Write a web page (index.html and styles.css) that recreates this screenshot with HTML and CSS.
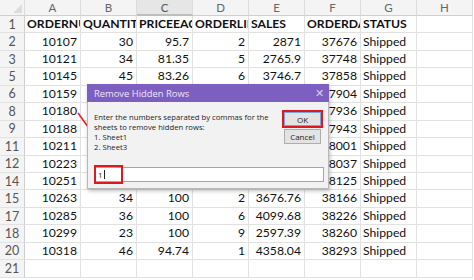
FILE: index.html
```html
<!DOCTYPE html>
<html>
<head>
<meta charset="utf-8">
<link rel="stylesheet" href="styles.css">
</head>
<body>
<div class="sheet">
  <div class="grid">
    <div class="hd corner"><span class="tri"></span></div>
    <div class="hd">A</div><div class="hd">B</div><div class="hd sel">C</div><div class="hd">D</div><div class="hd">E</div><div class="hd">F</div><div class="hd">G</div><div class="hd">H</div>

    <div class="rn">1</div><div class="c b">ORDERNUMBER</div><div class="c b">QUANTITYORDERED</div><div class="c b">PRICEEACH</div><div class="c b">ORDERLINENUMBER</div><div class="c b">SALES</div><div class="c b">ORDERDATE</div><div class="c b">STATUS</div><div class="c"></div>
    <div class="rn">2</div><div class="c n">10107</div><div class="c n">30</div><div class="c n">95.7</div><div class="c n">2</div><div class="c n">2871</div><div class="c n">37676</div><div class="c">Shipped</div><div class="c"></div>
    <div class="rn">3</div><div class="c n">10121</div><div class="c n">34</div><div class="c n">81.35</div><div class="c n">5</div><div class="c n">2765.9</div><div class="c n">37748</div><div class="c">Shipped</div><div class="c"></div>
    <div class="rn">5</div><div class="c n">10145</div><div class="c n">45</div><div class="c n">83.26</div><div class="c n">6</div><div class="c n">3746.7</div><div class="c n">37858</div><div class="c">Shipped</div><div class="c"></div>
    <div class="rn">6</div><div class="c n">10159</div><div class="c n">49</div><div class="c n">100</div><div class="c n">14</div><div class="c n">5205.27</div><div class="c n">37904</div><div class="c">Shipped</div><div class="c"></div>
    <div class="rn">8</div><div class="c n">10180</div><div class="c n">29</div><div class="c n">86.13</div><div class="c n">9</div><div class="c n">2497.77</div><div class="c n">37936</div><div class="c">Shipped</div><div class="c"></div>
    <div class="rn">9</div><div class="c n">10188</div><div class="c n">48</div><div class="c n">100</div><div class="c n">1</div><div class="c n">5512.32</div><div class="c n">37943</div><div class="c">Shipped</div><div class="c"></div>
    <div class="rn">11</div><div class="c n">10211</div><div class="c n">41</div><div class="c n">100</div><div class="c n">14</div><div class="c n">4708.44</div><div class="c n">38001</div><div class="c">Shipped</div><div class="c"></div>
    <div class="rn">12</div><div class="c n">10223</div><div class="c n">37</div><div class="c n">100</div><div class="c n">1</div><div class="c n">3965.66</div><div class="c n">38037</div><div class="c">Shipped</div><div class="c"></div>
    <div class="rn">14</div><div class="c n">10251</div><div class="c n">28</div><div class="c n">100</div><div class="c n">2</div><div class="c n">3188.64</div><div class="c n">38125</div><div class="c">Shipped</div><div class="c"></div>
    <div class="rn">15</div><div class="c n">10263</div><div class="c n">34</div><div class="c n">100</div><div class="c n">2</div><div class="c n">3676.76</div><div class="c n">38166</div><div class="c">Shipped</div><div class="c"></div>
    <div class="rn">17</div><div class="c n">10285</div><div class="c n">36</div><div class="c n">100</div><div class="c n">6</div><div class="c n">4099.68</div><div class="c n">38226</div><div class="c">Shipped</div><div class="c"></div>
    <div class="rn">18</div><div class="c n">10299</div><div class="c n">23</div><div class="c n">100</div><div class="c n">9</div><div class="c n">2597.39</div><div class="c n">38260</div><div class="c">Shipped</div><div class="c"></div>
    <div class="rn">20</div><div class="c n">10318</div><div class="c n">46</div><div class="c n">94.74</div><div class="c n">1</div><div class="c n">4358.04</div><div class="c n">38293</div><div class="c">Shipped</div><div class="c"></div>
    <div class="rn">21</div><div class="c"></div><div class="c"></div><div class="c"></div><div class="c"></div><div class="c"></div><div class="c"></div><div class="c"></div><div class="c"></div>
  </div>

  <svg class="arrow" width="24" height="28" viewBox="0 0 24 28">
    <line x1="2" y1="2" x2="15" y2="20" stroke="#e8232b" stroke-width="1.6"/>
    <polygon points="18,25 11,19.5 17,16" fill="#e8232b"/>
  </svg>

  <div class="dialog">
    <div class="titlebar">
      <span class="title">Remove Hidden Rows</span>
      <span class="close">✕</span>
    </div>
    <div class="body">
      <div class="top">
        <div class="msg">
          <div>Enter the numbers separated by commas for the</div>
          <div>sheets to remove hidden rows:</div>
          <div>1. Sheet1</div>
          <div>2. Sheet3</div>
        </div>
        <div class="buttons">
          <div class="okwrap"><div class="btn ok">OK</div></div>
          <div class="btn cancel">Cancel</div>
        </div>
      </div>
      <div class="inputrow">
        <div class="input"><span class="val">1</span><span class="caret"></span></div>
        <div class="mark"></div>
      </div>
    </div>
  </div>
</div>
</body>
</html>
```
FILE: styles.css
```css
* { box-sizing: border-box; }
html, body { margin: 0; padding: 0; background: #fff; }
body { width: 474px; height: 280px; overflow: hidden; }

.sheet { position: relative; width: 474px; height: 280px; }

.grid {
  display: grid;
  grid-template-columns: 25px repeat(8, 56px);
  grid-template-rows: 16px repeat(15, 17.45px);
  font-family: Lato, "Noto Sans", sans-serif;
  font-size: 12.2px;
  color: #111;
}

.hd {
  background: #f4f4f4;
  color: #666;
  font-size: 11.5px;
  display: flex;
  align-items: center;
  justify-content: center;
  border-right: 1px solid #dcdcdc;
  border-bottom: 1px solid #cfcfcf;
}
.hd.sel { background: #e6e6e6; border-bottom: 2px solid #b9c0b9; color: #555; }
.corner { position: relative; }
.tri {
  position: absolute;
  right: 2px;
  bottom: 2px;
  width: 0; height: 0;
  border-left: 9px solid transparent;
  border-bottom: 9px solid #dcdcdc;
}

.rn {
  background: #f4f4f4;
  color: #555;
  font-size: 12.5px;
  display: flex;
  align-items: center;
  justify-content: center;
  border-right: 1px solid #cfcfcf;
  border-bottom: 1px solid #e2e2e2;
}

.c {
  border-right: 1px solid #e1e1e1;
  border-bottom: 1px solid #e1e1e1;
  padding: 0 2px;
  white-space: nowrap;
  overflow: hidden;
  display: flex;
  align-items: center;
  line-height: 1;
}
.c.n { justify-content: flex-end; padding-right: 3px; }
.c.b { font-weight: 700; }

.arrow { position: absolute; left: 76px; top: 111px; }

.dialog {
  position: absolute;
  left: 87px;
  top: 84px;
  width: 242px;
  height: 105px;
  background: #f2f2f2;
  border: 1px solid #b8b8b8;
  border-top: none;
  box-shadow: 1px 2px 4px rgba(0,0,0,0.25);
  font-family: "Open Sans", "Noto Sans", sans-serif;
  font-size: 7.7px;
  color: #1e1e1e;
}
.titlebar {
  height: 18px;
  margin: 0 -1px;
  background: #7c5fc0;
  display: flex;
  align-items: center;
  justify-content: space-between;
  padding: 0 5px 0 7px;
}
.title { color: #ece6fa; font-size: 9.4px; }
.close { color: #d9cdf3; font-size: 10.5px; }

.body { padding: 8px 5px 0 6px; }
.top { display: flex; justify-content: space-between; }
.msg { line-height: 10px; padding-top: 2px; }
.buttons { display: flex; flex-direction: column; align-items: center; gap: 1px; width: 41px; }
.okwrap { border: 2px solid #dd1a22; width: 41px; height: 18px; }
.btn {
  display: flex; align-items: center; justify-content: center;
  background: #e3e3e3;
  border: 1px solid #adadad;
  font-size: 8px;
  color: #222;
}
.ok { width: 37px; height: 14px; border-color: #7aa6d6; }
.cancel { width: 37px; height: 15px; }

.inputrow { position: relative; margin-top: 15px; }
.input {
  height: 15px;
  width: 230px;
  background: #fff;
  border: 1px solid #7fb0dc;
  display: flex; align-items: center;
  padding-left: 3px;
  font-size: 8px;
}
.caret { display: inline-block; width: 1px; height: 9px; background: #222; margin-left: 1px; }
.mark {
  position: absolute;
  left: 0; top: -2px;
  width: 29px; height: 19px;
  border: 2px solid #dd1a22;
}
```
